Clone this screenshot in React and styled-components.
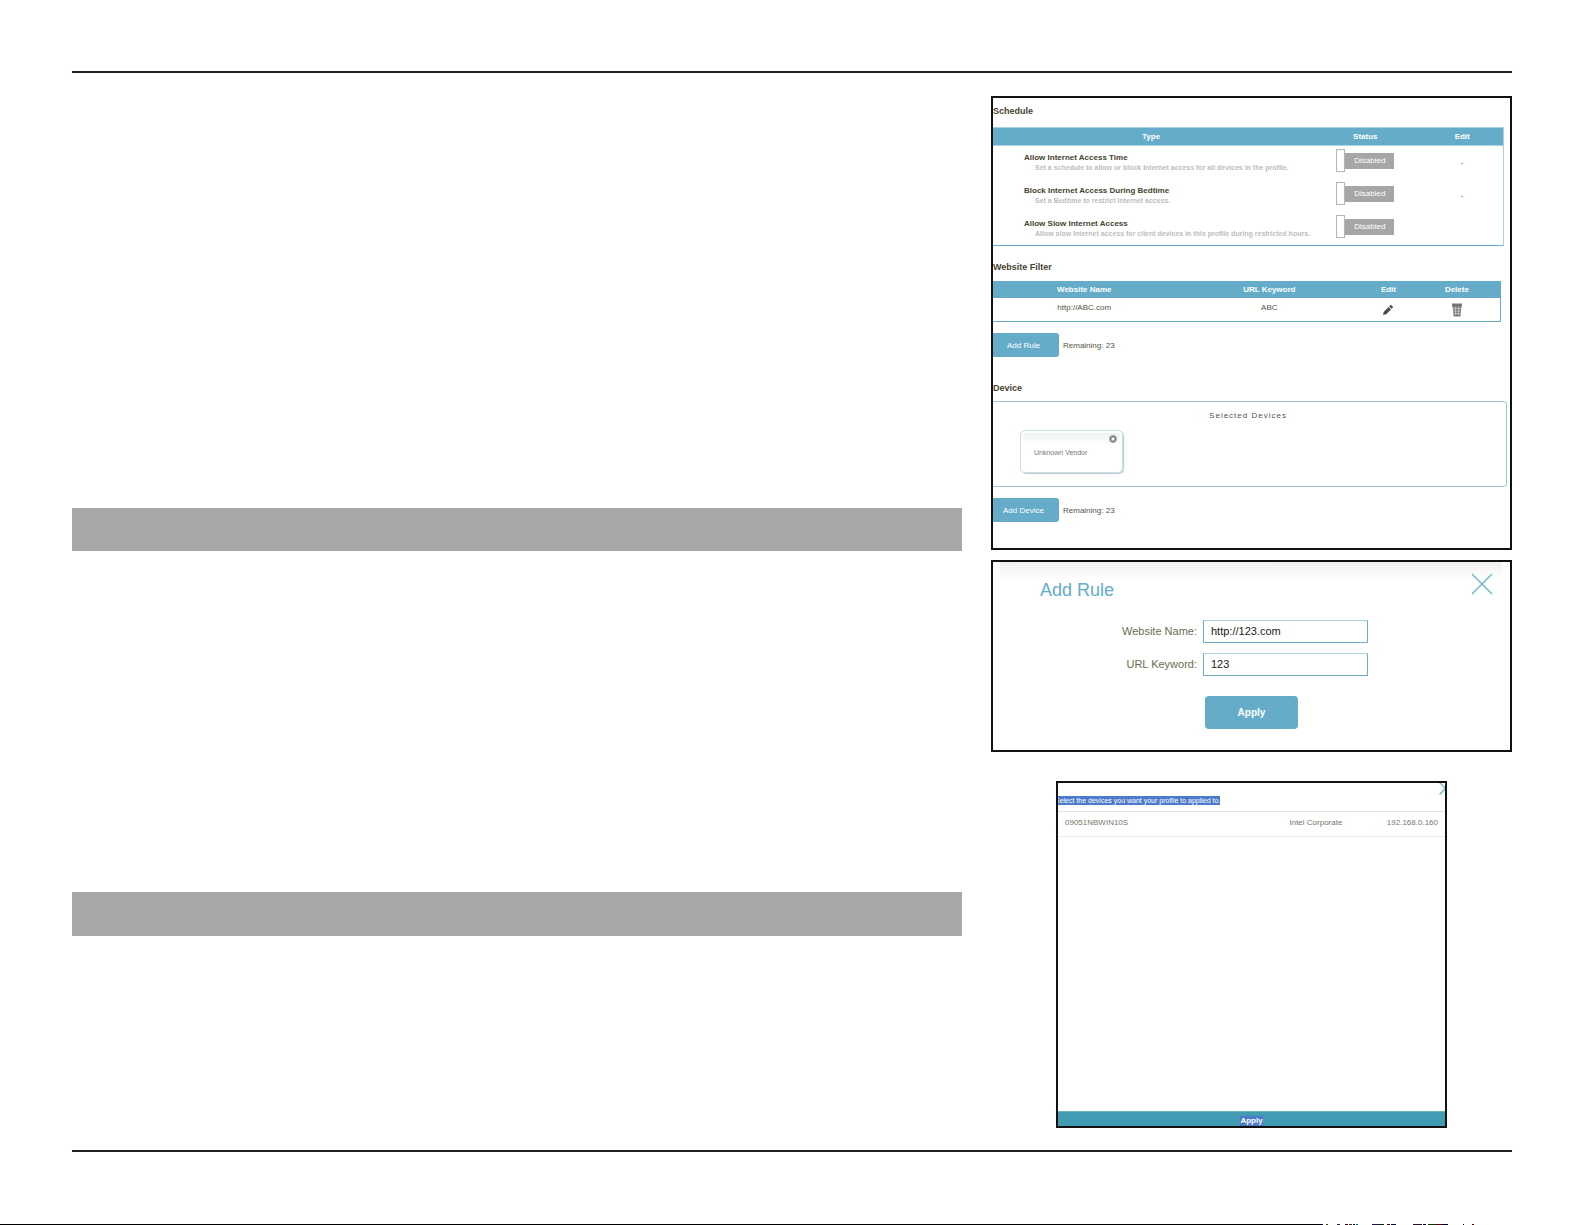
import { useState } from "react";
import styled, { createGlobalStyle } from "styled-components";

const colors = {
  blue: "#65acc8",
  lightBlue: "#aad3e1",
  teal: "#419bb2",
  bar: "#a7a7a5",
  ink: "#111111",
  heading: "#45432f",
  text: "#55554a",
  muted: "#bdbdbd",
};

const GlobalStyle = createGlobalStyle`
  * {
    box-sizing: border-box;
  }
  body {
    margin: 0;
    background: #ffffff;
    font-family: "Liberation Sans", Arial, sans-serif;
    font-size: 8px;
    color: ${colors.text};
  }
  button, input {
    font-family: inherit;
  }
`;

const Page = styled.div`
  padding: 71px 73px 72px 72px;
`;

const Rule = styled.hr`
  height: 2px;
  margin: 0;
  border: 0;
  background: #231f20;
`;

const Content = styled.main`
  display: grid;
  grid-template-columns: minmax(0, 890fr) minmax(0, 521fr);
  column-gap: 29px;
  padding: 23px 0 22px;
`;

const TextColumn = styled.div`
  display: flex;
  flex-direction: column;
  gap: 341px;
  padding-top: 412px;
`;

const Bar = styled.div`
  height: ${(props) => props.$height}px;
  background: ${colors.bar};
`;

const Figures = styled.div`
  display: flex;
  flex-direction: column;
`;

const Panel = styled.section`
  position: relative;
  overflow: hidden;
  border: 2px solid ${colors.ink};
  background: #ffffff;
`;

const ProfilePanel = styled(Panel)`
  padding-bottom: 26px;
`;

const SectionTitle = styled.h2`
  margin: 0;
  padding-top: ${(props) => props.$top}px;
  font-size: 9px;
  line-height: 12px;
  font-weight: bold;
  color: ${colors.heading};
`;

const Table = styled.table`
  width: calc(100% - ${(props) => props.$inset}px);
  margin-top: ${(props) => props.$top}px;
  table-layout: fixed;
  border-spacing: 0;
  border-right: 1px solid ${(props) => props.$edge};
  border-bottom: 1px solid ${colors.blue};

  th,
  td {
    padding: 0;
    text-align: center;
    vertical-align: middle;
  }
  th {
    height: ${(props) => props.$head}px;
    background: ${colors.blue};
    border: solid ${colors.lightBlue};
    border-width: ${(props) => (props.$lined ? "1px 0" : "0")};
    color: #ffffff;
    font-weight: bold;
  }
  td {
    height: ${(props) => props.$row}px;
    line-height: 10px;
  }
`;

const ScheduleCell = styled.td`
  && {
    padding-left: 31px;
    text-align: left;
  }
`;

const RaisedCell = styled.td`
  && {
    padding-bottom: 4px;
  }
`;

const RuleName = styled.div`
  font-weight: bold;
  line-height: 10px;
  color: ${colors.heading};
`;

const RuleHint = styled.div`
  padding-left: 11px;
  font-size: 7px;
  font-weight: bold;
  line-height: 9px;
  white-space: nowrap;
  color: ${colors.muted};
`;

const Toggle = styled.button`
  display: inline-flex;
  align-items: center;
  padding: 0;
  border: 0;
  background: none;
  font-size: 8px;
  color: #ffffff;
  vertical-align: middle;
`;

const ToggleHandle = styled.span`
  width: 9px;
  height: 23px;
  border: 1px solid #b5b5b5;
  background: #ffffff;
`;

const ToggleLabel = styled.span`
  width: 49px;
  background: #a6a6a6;
  line-height: 16px;
`;

const IconButton = styled.button`
  display: inline-flex;
  padding: 0;
  border: 0;
  background: none;
  vertical-align: middle;
`;

const Actions = styled.div`
  display: flex;
  align-items: center;
  gap: 4px;
  margin-top: 11px;
`;

const ActionButton = styled.button`
  width: 66px;
  height: 24px;
  padding: 0 5px 0 0;
  border: 0;
  border-radius: 0 3px 3px 0;
  background: ${colors.blue};
  color: #ffffff;
  font-size: 8px;
`;

const DeviceBox = styled.div`
  margin: 7px 3px 0 0;
  padding: 9px 4px 13px 27px;
  border: solid #9cc7d3;
  border-width: 1px 1px 1px 0;
  border-radius: 0 4px 4px 0;
`;

const DeviceBoxTitle = styled.div`
  padding-right: 26px;
  text-align: center;
  font-size: 8px;
  line-height: 10px;
  letter-spacing: 1px;
`;

const DeviceCard = styled.div`
  position: relative;
  width: 103px;
  margin-top: 9px;
  padding: 17px 13px 14px;
  border: 1px solid #c9dcdf;
  border-radius: 5px;
  box-shadow: inset 0 0 0 2px #ffffff, 1px 1px 1px #b9cdcd;
  background: linear-gradient(#e9f1f1, #ffffff 14px);
  font-size: 7px;
  line-height: 10px;
  color: #777777;
`;

const CardClose = styled(IconButton)`
  position: absolute;
  top: 4px;
  right: 5px;
`;

const RulePanel = styled(Panel)`
  margin-top: 10px;
  padding-bottom: 21px;
`;

const RuleHeader = styled.header`
  display: flex;
  justify-content: space-between;
  margin: 0 8px 0 7px;
  padding: 11px 9px 0 40px;
  background: linear-gradient(#f1f1f0, #fdfdfd 16px, #ffffff 17px);
`;

const RuleTitle = styled.h2`
  margin: 0;
  padding-top: 6px;
  font-size: 18px;
  font-weight: normal;
  line-height: 22px;
  color: #62adc9;
`;

const RuleForm = styled.form`
  display: grid;
  grid-template-columns: 204fr 165fr 136fr;
  gap: 10px 6px;
  margin-top: 19px;
`;

const FieldLabel = styled.label`
  grid-column: 1;
  text-align: right;
  font-size: 11px;
  line-height: 23px;
  color: #6b6b52;
`;

const Field = styled.input`
  min-width: 0;
  height: 23px;
  padding: 0 7px 2px;
  border: 1px solid #6bb0c8;
  border-top-color: ${colors.lightBlue};
  background: #ffffff;
  font-size: 11px;
  color: #222222;
`;

const ApplyButton = styled.button`
  grid-column: 1 / -1;
  justify-self: center;
  width: 93px;
  height: 33px;
  margin-top: 10px;
  border: 0;
  border-radius: 4px;
  background: ${colors.blue};
  color: #ffffff;
  font-size: 10px;
  font-weight: bold;
`;

const SelectPanel = styled(Panel)`
  display: flex;
  flex-direction: column;
  margin: 29px 65px 0;
`;

const SelectHeader = styled.div`
  margin-left: -3px;
  padding: 13px 0 6px;
  border-bottom: 1px solid #e2e2e2;
  line-height: 9px;
`;

const Selection = styled.span`
  display: inline-block;
  background: #4d7bcb;
  color: #ffffff;
  font-size: ${(props) => props.$size}px;
  line-height: ${(props) => props.$line}px;
  vertical-align: top;
`;

const SelectClose = styled(IconButton)`
  position: absolute;
  top: -1px;
  right: -7px;
`;

const DeviceTable = styled.table`
  width: 100%;
  table-layout: fixed;
  border-spacing: 0;
  margin-bottom: 274px;

  td {
    height: 25px;
    padding: 0 7px 3px;
    border-bottom: 1px solid #ebebeb;
    color: #77776b;
  }
  td:last-child {
    text-align: right;
  }
`;

const SelectFooter = styled.button`
  height: 15px;
  padding: 4px 0 0;
  border: 0;
  border-top: 1px solid #6fb0c0;
  background: ${colors.teal};
  font-weight: bold;
  line-height: 10px;
`;

const PageEdge = styled.svg`
  display: block;
  width: 100%;
  height: 1px;
`;

const schedules = [
  {
    name: "Allow Internet Access Time",
    hint: "Set a schedule to allow or block Internet access for all devices in the profile.",
    edit: "-",
  },
  {
    name: "Block Internet Access During Bedtime",
    hint: "Set a Bedtime to restrict Internet access.",
    edit: "-",
  },
  {
    name: "Allow Slow Internet Access",
    hint: "Allow slow Internet access for client devices in this profile during restricted hours.",
    edit: "",
  },
];

// [start, width, colour] of the specks after the solid part of the edge
const specks = [
  [1322, 1, "#0000ff"],
  [1326, 2, "#444400"],
  [1337, 3, "#222244"],
  [1345, 3, "#330022"],
  [1349, 3, "#443300"],
  [1353, 2, "#000066"],
  [1356, 2, "#006666"],
  [1372, 6, "#221144"],
  [1378, 6, "#112211"],
  [1387, 3, "#440000"],
  [1391, 5, "#001133"],
  [1413, 9, "#221122"],
  [1423, 3, "#000033"],
  [1428, 8, "#113300"],
  [1436, 6, "#550011"],
  [1442, 6, "#000022"],
  [1463, 1, "#000000"],
  [1472, 2, "#550000"],
];

function Cross({ size }) {
  return (
    <svg width={size} height={size} viewBox="0 0 22 22" aria-hidden="true">
      <path
        d="M1 1 21 21M21 1 1 21"
        stroke="#6bb5d2"
        strokeWidth={size > 15 ? 1.4 : 2.4}
        fill="none"
      />
    </svg>
  );
}

function Pencil() {
  return (
    <svg width="12" height="12" viewBox="0 0 12 12" aria-hidden="true">
      <path
        d="M1 11 1.8 7.8 6.6 3 9 5.4 4.2 10.2ZM7.2 2.4 8.3 1.3Q8.8.8 9.4 1.3L10.7 2.6Q11.2 3.2 10.7 3.7L9.6 4.8Z"
        fill="#4c4c4c"
      />
    </svg>
  );
}

function Trash() {
  return (
    <svg width="12" height="14" viewBox="0 0 12 14" aria-hidden="true">
      <path d="M1 .5H11V3H1ZM1.6 3.5H10.4L9.4 13.5H2.6Z" fill="#777777" />
      <path
        d="M2 5.5H10M2 8H10M2 10.5H10M4.4 3.5 4.7 12.5M7.6 3.5 7.3 12.5"
        stroke="#d5d5d5"
        strokeWidth="0.7"
      />
      <path d="M1 3.2H11" stroke="#555555" strokeWidth="0.7" />
    </svg>
  );
}

function RoundClose() {
  return (
    <svg width="8" height="8" viewBox="0 0 8 8" aria-hidden="true">
      <circle cx="4" cy="4" r="3.7" fill="#858585" />
      <path d="M2.6 2.6 5.4 5.4M5.4 2.6 2.6 5.4" stroke="#ffffff" strokeWidth="1.2" />
    </svg>
  );
}

function App() {
  const [websiteName, setWebsiteName] = useState("http://123.com");
  const [keyword, setKeyword] = useState("123");

  return (
    <>
      <GlobalStyle />
      <Page>
        <Rule />
        <Content>
          <TextColumn>
            <Bar $height={43} />
            <Bar $height={44} />
          </TextColumn>
          <Figures>
            <ProfilePanel>
              <SectionTitle $top={7}>Schedule</SectionTitle>
              <Table $inset={6} $top={10} $head={19} $row={33} $edge={colors.lightBlue} $lined>
                <colgroup>
                  <col style={{ width: "62%" }} />
                  <col style={{ width: "22%" }} />
                  <col style={{ width: "16%" }} />
                </colgroup>
                <thead>
                  <tr>
                    <th>Type</th>
                    <th>Status</th>
                    <th>Edit</th>
                  </tr>
                </thead>
                <tbody>
                  {schedules.map((item) => (
                    <tr key={item.name}>
                      <ScheduleCell>
                        <RuleName>{item.name}</RuleName>
                        <RuleHint>{item.hint}</RuleHint>
                      </ScheduleCell>
                      <RaisedCell>
                        <Toggle
                          type="button"
                          role="switch"
                          aria-checked="false"
                          aria-label={item.name}
                        >
                          <ToggleHandle />
                          <ToggleLabel>Disabled</ToggleLabel>
                        </Toggle>
                      </RaisedCell>
                      <td>{item.edit}</td>
                    </tr>
                  ))}
                </tbody>
              </Table>

              <SectionTitle $top={15}>Website Filter</SectionTitle>
              <Table $inset={9} $top={8} $head={17} $row={23} $edge={colors.blue}>
                <colgroup>
                  <col style={{ width: "36%" }} />
                  <col style={{ width: "37%" }} />
                  <col style={{ width: "10%" }} />
                  <col style={{ width: "17%" }} />
                </colgroup>
                <thead>
                  <tr>
                    <th>Website Name</th>
                    <th>URL Keyword</th>
                    <th>Edit</th>
                    <th>Delete</th>
                  </tr>
                </thead>
                <tbody>
                  <tr>
                    <RaisedCell>http://ABC.com</RaisedCell>
                    <RaisedCell>ABC</RaisedCell>
                    <td>
                      <IconButton type="button" aria-label="Edit">
                        <Pencil />
                      </IconButton>
                    </td>
                    <td>
                      <IconButton type="button" aria-label="Delete">
                        <Trash />
                      </IconButton>
                    </td>
                  </tr>
                </tbody>
              </Table>
              <Actions>
                <ActionButton type="button">Add Rule</ActionButton>
                <span>Remaining: 23</span>
              </Actions>

              <SectionTitle $top={25}>Device</SectionTitle>
              <DeviceBox>
                <DeviceBoxTitle>Selected Devices</DeviceBoxTitle>
                <DeviceCard>
                  Unknown Vendor
                  <CardClose type="button" aria-label="Remove device">
                    <RoundClose />
                  </CardClose>
                </DeviceCard>
              </DeviceBox>
              <Actions>
                <ActionButton type="button">Add Device</ActionButton>
                <span>Remaining: 23</span>
              </Actions>
            </ProfilePanel>

            <RulePanel>
              <RuleHeader>
                <RuleTitle>Add Rule</RuleTitle>
                <IconButton type="button" aria-label="Close">
                  <Cross size={22} />
                </IconButton>
              </RuleHeader>
              <RuleForm onSubmit={(e) => e.preventDefault()}>
                <FieldLabel htmlFor="website-name">Website Name:</FieldLabel>
                <Field
                  id="website-name"
                  type="text"
                  value={websiteName}
                  onChange={(e) => setWebsiteName(e.target.value)}
                />
                <FieldLabel htmlFor="url-keyword">URL Keyword:</FieldLabel>
                <Field
                  id="url-keyword"
                  type="text"
                  value={keyword}
                  onChange={(e) => setKeyword(e.target.value)}
                />
                <ApplyButton type="submit">Apply</ApplyButton>
              </RuleForm>
            </RulePanel>

            <SelectPanel>
              <SelectHeader>
                <Selection $size={7} $line={9}>
                  Select the devices you want your profile to applied to.
                </Selection>
              </SelectHeader>
              <SelectClose type="button" aria-label="Close">
                <Cross size={13} />
              </SelectClose>
              <DeviceTable>
                <colgroup>
                  <col style={{ width: "58%" }} />
                  <col style={{ width: "21%" }} />
                  <col style={{ width: "21%" }} />
                </colgroup>
                <tbody>
                  <tr>
                    <td>09051NBWIN10S</td>
                    <td>Intel Corporate</td>
                    <td>192.168.0.160</td>
                  </tr>
                </tbody>
              </DeviceTable>
              <SelectFooter type="button">
                <Selection $size={8} $line={10}>
                  Apply
                </Selection>
              </SelectFooter>
            </SelectPanel>
          </Figures>
        </Content>
        <Rule />
      </Page>
      <PageEdge viewBox="0 0 1585 1" preserveAspectRatio="none" aria-hidden="true">
        <rect width="1322" height="1" fill="#000000" />
        {specks.map(([x, width, fill]) => (
          <rect key={x} x={x} width={width} height="1" fill={fill} />
        ))}
      </PageEdge>
    </>
  );
}

export default App;
